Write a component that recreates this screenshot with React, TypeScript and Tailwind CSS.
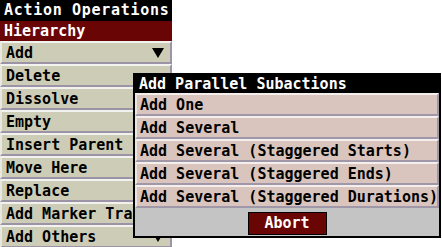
const leftItems = [
  { label: "Add", arrow: true },
  { label: "Delete" },
  { label: "Dissolve" },
  { label: "Empty" },
  { label: "Insert Parent" },
  { label: "Move Here" },
  { label: "Replace" },
  { label: "Add Marker Track" },
  { label: "Add Others", arrow: true },
];

const subactions = [
  "Add One",
  "Add Several",
  "Add Several (Staggered Starts)",
  "Add Several (Staggered Ends)",
  "Add Several (Staggered Durations)",
];

const DownArrow = () => (
  <svg width="12" height="10" viewBox="0 0 12 10" className="shrink-0">
    <polygon points="0,0 12,0 6,10" fill="#000" />
  </svg>
);

const App = (): JSX.Element => {
  return (
    <div className="relative h-[247px] w-[442px] overflow-hidden bg-white font-['DejaVu_Sans_Mono',monospace] text-[15px] font-bold leading-none">
      {/* left menu */}
      <div className="flex w-[172px] flex-col bg-black">
        <div className="flex h-[21px] items-center whitespace-nowrap pl-[4px] tracking-[0.7px] text-white">
          Action Operations
        </div>
        <div className="flex h-[20px] items-center bg-[#6a0505] pl-[4px] text-white">
          Hierarchy
        </div>
        {leftItems.map((item) => (
          <div
            key={item.label}
            className="flex h-[23px] items-center justify-between overflow-hidden whitespace-nowrap border-t-2 border-b-2 border-l-2 border-r-2 border-t-[#f2f2ee] border-b-[#9c94a6] border-l-[#e8e8e0] border-r-[#9c94a6] bg-[#cdcdb7] pl-[4px] pr-[6px] pt-[1px] text-black"
          >
            <span>{item.label}</span>
            {item.arrow && <DownArrow />}
          </div>
        ))}
      </div>

      {/* parallel subactions popup */}
      <div className="absolute left-[133px] top-[73px] flex w-[308px] flex-col border-2 border-black bg-black">
        <div className="flex h-[18px] items-center whitespace-nowrap pl-[4px] pt-[1px] text-white">
          Add Parallel Subactions
        </div>
        {subactions.map((label) => (
          <div
            key={label}
            className="flex h-[23px] items-center whitespace-nowrap border-t-2 border-b-2 border-l-2 border-r-2 border-t-[#f4eeec] border-b-[#a098a8] border-l-[#ece4e0] border-r-[#a098a8] bg-[#d9c5bd] pl-[3px] pt-[1px] text-black"
          >
            {label}
          </div>
        ))}
        <div className="flex h-[28px] items-end justify-center bg-[#c4c4c4] pb-[1px]">
          <button
            type="button"
            className="flex h-[23px] w-[79px] items-center justify-center border border-black bg-[#6a0505] text-white"
          >
            Abort
          </button>
        </div>
      </div>
    </div>
  );
};

export default App;
